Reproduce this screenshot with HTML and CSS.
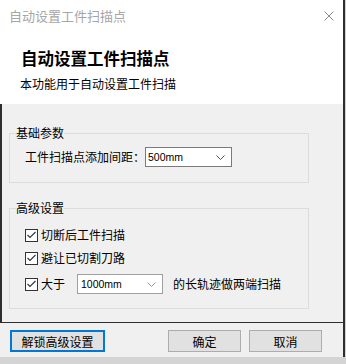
FILE: index.html
```html
<!DOCTYPE html>
<html lang="zh-CN">
<head>
    <meta charset="UTF-8">
    <meta name="viewport" content="width=device-width, initial-scale=1.0">
    <title>自动设置工件扫描点</title>
    <link rel="stylesheet" href="styles.css">
</head>
<body>
    <div class="dialog">
        <div class="titlebar">
            <span class="title">自动设置工件扫描点</span>
            <svg class="close" width="10" height="10" viewBox="0 0 10 10">
                <path d="M0.5 0.5 L9.5 9.5 M9.5 0.5 L0.5 9.5" stroke="#8c8c8c" stroke-width="1" fill="none"/>
            </svg>
        </div>
        <div class="header">
            <div class="heading">自动设置工件扫描点</div>
            <div class="desc">本功能用于自动设置工件扫描</div>
        </div>
        <div class="content">
            <fieldset class="group basic">
                <legend>基础参数</legend>
                <div class="row">
                    <span>工件扫描点添加间距：</span>
                    <div class="combo">
                        <span class="value">500mm</span>
                        <svg width="9" height="5" viewBox="0 0 9 5"><path d="M0.5 0.5 L4.5 4.5 L8.5 0.5" stroke="#555" fill="none"/></svg>
                    </div>
                </div>
            </fieldset>
            <fieldset class="group advanced">
                <legend>高级设置</legend>
                <div class="row check">
                    <span class="box"><svg width="11" height="11" viewBox="0 0 11 11"><path d="M1.5 5 L4 7.5 L9.5 2" stroke="#2d3a4a" stroke-width="1.2" fill="none"/></svg></span>
                    <span>切断后工件扫描</span>
                </div>
                <div class="row check">
                    <span class="box"><svg width="11" height="11" viewBox="0 0 11 11"><path d="M1.5 5 L4 7.5 L9.5 2" stroke="#2d3a4a" stroke-width="1.2" fill="none"/></svg></span>
                    <span>避让已切割刀路</span>
                </div>
                <div class="row check last">
                    <span class="box"><svg width="11" height="11" viewBox="0 0 11 11"><path d="M1.5 5 L4 7.5 L9.5 2" stroke="#2d3a4a" stroke-width="1.2" fill="none"/></svg></span>
                    <span>大于</span>
                    <div class="combo small">
                        <span class="value">1000mm</span>
                        <svg width="9" height="5" viewBox="0 0 9 5"><path d="M0.5 0.5 L4.5 4.5 L8.5 0.5" stroke="#999" fill="none"/></svg>
                    </div>
                    <span class="after">的长轨迹做两端扫描</span>
                </div>
            </fieldset>
        </div>
        <div class="footer">
            <button class="button focus">解锁高级设置</button>
            <span class="spacer"></span>
            <button class="button">确定</button>
            <button class="button">取消</button>
        </div>
    </div>
</body>
</html>
```

FILE: styles.css
```css
body {
    margin: 0;
    background-color: #d4d4d4;
    font-family: "Noto Sans CJK SC", "Noto Sans", sans-serif;
    font-size: 12px;
    color: #000;
}
.dialog {
    width: 343px;
    border-right: 2px solid #2e2e2e;
}
.titlebar {
    height: 31px;
    display: flex;
    align-items: center;
    padding-left: 9px;
    padding-right: 9px;
    background-color: #fff;
}
.title {
    flex: 1;
    font-size: 13px;
    color: #a6a6a6;
}
.header {
    background-color: #fff;
    padding: 16px 0 12px 21px;
    height: 73px;
    box-sizing: border-box;
}
.heading {
    font-size: 16.5px;
    font-weight: bold;
    line-height: 22px;
}
.desc {
    margin-top: 7px;
    line-height: 16px;
    margin-left: -1px;
}
.content {
    background-color: #f0f0f0;
    border-left: 2px solid #2e2e2e;
    height: 218px;
    box-sizing: border-box;
    padding-top: 21px;
}
.group {
    margin: 0 0 0 7px;
    width: 300px;
    box-sizing: border-box;
    border: 1px solid #dcdcdc;
    padding: 6px 0 15px 6px;
    min-inline-size: 0;
}
.group legend {
    padding: 0;
    line-height: 16px;
}
.advanced {
    margin-top: 17px;
    padding-top: 9px;
    padding-bottom: 14px;
}
.row {
    display: flex;
    align-items: center;
    height: 20px;
    margin-left: 9px;
    line-height: 16px;
}
.check + .check {
    margin-top: 3px;
}
.check.last {
    margin-top: 6px;
}
.box {
    width: 11px;
    height: 11px;
    border: 1px solid #333;
    background-color: #fff;
    margin-right: 3px;
    display: flex;
}
.combo {
    width: 87px;
    height: 20px;
    box-sizing: border-box;
    border: 1px solid #7a7a7a;
    background-color: #fff;
    display: flex;
    align-items: center;
    padding: 0 6px 0 2px;
}
.combo .value {
    flex: 1;
    font-family: "Liberation Sans", Arial, sans-serif;
    font-size: 10.5px;
}
.combo.small {
    width: 86px;
    border-color: #a0a0a0;
    margin-left: 12px;
    padding-left: 3px;
}
.after {
    margin-left: 10px;
}
.footer {
    background-color: #f0f0f0;
    border-top: 1px solid #2e2e2e;
    height: 35px;
    box-sizing: border-box;
    display: flex;
    align-items: flex-start;
    padding: 7px 21px 0 10px;
    gap: 8px;
}
.spacer {
    flex: 1;
}
.button {
    width: 73px;
    height: 22px;
    border: 1px solid #adadad;
    background-color: #e1e1e1;
    font-family: "Noto Sans CJK SC", "Noto Sans", sans-serif;
    font-size: 12px;
    padding: 0;
    color: #000;
}
.button.focus {
    width: 95px;
    border: 2px solid #0078d7;
}
```
